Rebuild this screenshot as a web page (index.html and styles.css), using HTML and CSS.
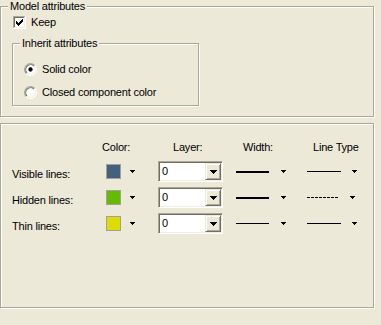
FILE: index.html
```html
<!DOCTYPE html>
<html>
<head>
<meta charset="utf-8">
<link rel="stylesheet" href="styles.css">
</head>
<body>
<div class="page">
  <div class="group model">
    <span class="legend">Model attributes</span>
    <div class="check-row">
      <svg class="checkbox" width="13" height="13" viewBox="0 0 13 13">
        <rect x="0" y="0" width="13" height="13" fill="#fff"/>
        <path d="M0 0h12v1H1v11H0z" fill="#aca899"/>
        <path d="M1 1h10v1H2v9H1z" fill="#716f64"/>
        <path d="M11 1h1v11H1v-1h10z" fill="#f1efe2"/>
        <rect x="2" y="2" width="9" height="9" fill="#fff"/>
        <path d="M3 5h1v3h-1zM4 6h1v3h-1zM5 7h1v3h-1zM6 6h1v3h-1zM7 5h1v3h-1zM8 4h1v3h-1zM9 3h1v3h-1z" fill="#000"/>
      </svg>
      <span>Keep</span>
    </div>
    <div class="group inherit">
      <span class="legend">Inherit attributes</span>
      <div class="radio-row">
        <svg class="radio" width="13" height="13" viewBox="0 0 12 12">
          <circle cx="6" cy="6" r="4.5" fill="#fff"/>
          <path d="M2.11 9.89A5.5 5.5 0 0 1 9.89 2.11" fill="none" stroke="#aca899"/>
          <path d="M2.82 9.18A4.5 4.5 0 0 1 9.18 2.82" fill="none" stroke="#716f64"/>
          <path d="M9.89 2.11A5.5 5.5 0 0 1 2.11 9.89" fill="none" stroke="#fff"/>
          <path d="M9.18 2.82A4.5 4.5 0 0 1 2.82 9.18" fill="none" stroke="#f1efe2"/>
          <circle cx="6" cy="6" r="2" fill="#000"/>
        </svg>
        <span>Solid color</span>
      </div>
      <div class="radio-row">
        <svg class="radio" width="13" height="13" viewBox="0 0 12 12">
          <circle cx="6" cy="6" r="4.5" fill="#fff"/>
          <path d="M2.11 9.89A5.5 5.5 0 0 1 9.89 2.11" fill="none" stroke="#aca899"/>
          <path d="M2.82 9.18A4.5 4.5 0 0 1 9.18 2.82" fill="none" stroke="#716f64"/>
          <path d="M9.89 2.11A5.5 5.5 0 0 1 2.11 9.89" fill="none" stroke="#fff"/>
          <path d="M9.18 2.82A4.5 4.5 0 0 1 2.82 9.18" fill="none" stroke="#f1efe2"/>
        </svg>
        <span>Closed component color</span>
      </div>
    </div>
  </div>

  <div class="group panel">
    <div class="grid">
      <span></span>
      <span class="head head-color">Color:</span>
      <span class="head head-layer">Layer:</span>
      <span class="head head-width">Width:</span>
      <span class="head head-type">Line Type</span>

      <span class="label">Visible lines:</span>
      <div class="cell"><span class="swatch swatch-blue"></span><svg class="tri" width="5" height="3"><path d="M0 0h5v1h-1v1h-1v1h-1v-1h-1v-1h-1z"/></svg></div>
      <div class="cell"><div class="combo"><span class="value">0</span><span class="combo-btn"><svg width="7" height="4"><path d="M0 0h7v1h-1v1h-1v1h-1v1h-1v-1h-1v-1h-1v-1h-1z"/></svg></span></div></div>
      <div class="cell"><span class="wline thick"></span><svg class="tri tri-w" width="5" height="3"><path d="M0 0h5v1h-1v1h-1v1h-1v-1h-1v-1h-1z"/></svg></div>
      <div class="cell"><span class="tline solid"></span><svg class="tri tri-t" width="5" height="3"><path d="M0 0h5v1h-1v1h-1v1h-1v-1h-1v-1h-1z"/></svg></div>

      <span class="label">Hidden lines:</span>
      <div class="cell"><span class="swatch swatch-green"></span><svg class="tri" width="5" height="3"><path d="M0 0h5v1h-1v1h-1v1h-1v-1h-1v-1h-1z"/></svg></div>
      <div class="cell"><div class="combo"><span class="value">0</span><span class="combo-btn"><svg width="7" height="4"><path d="M0 0h7v1h-1v1h-1v1h-1v1h-1v-1h-1v-1h-1v-1h-1z"/></svg></span></div></div>
      <div class="cell"><span class="wline thick"></span><svg class="tri tri-w" width="5" height="3"><path d="M0 0h5v1h-1v1h-1v1h-1v-1h-1v-1h-1z"/></svg></div>
      <div class="cell"><span class="tline dashed"></span><svg class="tri tri-t" width="5" height="3"><path d="M0 0h5v1h-1v1h-1v1h-1v-1h-1v-1h-1z"/></svg></div>

      <span class="label">Thin lines:</span>
      <div class="cell"><span class="swatch swatch-yellow"></span><svg class="tri" width="5" height="3"><path d="M0 0h5v1h-1v1h-1v1h-1v-1h-1v-1h-1z"/></svg></div>
      <div class="cell"><div class="combo"><span class="value">0</span><span class="combo-btn"><svg width="7" height="4"><path d="M0 0h7v1h-1v1h-1v1h-1v1h-1v-1h-1v-1h-1v-1h-1z"/></svg></span></div></div>
      <div class="cell"><span class="wline thin"></span><svg class="tri tri-w" width="5" height="3"><path d="M0 0h5v1h-1v1h-1v1h-1v-1h-1v-1h-1z"/></svg></div>
      <div class="cell"><span class="tline solid"></span><svg class="tri tri-t" width="5" height="3"><path d="M0 0h5v1h-1v1h-1v1h-1v-1h-1v-1h-1z"/></svg></div>
    </div>
  </div>
</div>
</body>
</html>
```

FILE: styles.css
```css
html, body {
  margin: 0;
  padding: 0;
  background: #ece9d8;
}

body {
  font-family: "Liberation Sans", Arial, sans-serif;
  font-size: 11px;
  line-height: 13px;
  letter-spacing: -0.2px;
  color: #000;
  width: 381px;
  height: 325px;
  overflow: hidden;
}

.page {
  display: flex;
  flex-direction: column;
  align-items: flex-start;
}

.group {
  position: relative;
  box-sizing: border-box;
  border: 1px solid #aca899;
  box-shadow: 1px 1px 0 #fff, inset 1px 1px 0 #fff;
}

.legend {
  position: absolute;
  top: -7px;
  left: 7px;
  padding: 0 2px;
  background: #ece9d8;
  white-space: nowrap;
}

.model {
  margin-top: 6px;
  width: 374px;
  height: 111px;
  display: flex;
  flex-direction: column;
  align-items: flex-start;
}

.check-row {
  display: flex;
  align-items: center;
  height: 13px;
  margin: 9px 0 0 12px;
  gap: 5px;
}

.checkbox,
.radio {
  display: block;
  flex: none;
}

.inherit {
  margin: 14px 0 0 11px;
  width: 187px;
  height: 63px;
  display: flex;
  flex-direction: column;
  align-items: flex-start;
  padding: 19px 0 0 11px;
  gap: 10px;
}

.radio-row {
  display: flex;
  align-items: center;
  height: 13px;
  gap: 5px;
}

.panel {
  margin-top: 6px;
  width: 374px;
  height: 185px;
}

.grid {
  display: grid;
  grid-template-columns: 94px 52px 78px 71px 1fr;
  grid-template-rows: 15px 21px 21px 21px;
  row-gap: 5px;
  padding: 17px 0 0 11px;
}

.head {
  align-self: start;
  white-space: nowrap;
}

.head-color { margin-left: -4px; }
.head-layer { margin-left: 15px; }
.head-width { margin-left: 7px; }
.head-type { margin-left: 6px; }

.label {
  align-self: start;
  padding-top: 7px;
  white-space: nowrap;
}

.cell {
  display: flex;
  align-items: center;
}

.swatch {
  display: block;
  box-sizing: border-box;
  width: 15px;
  height: 15px;
  border: 1px solid #a0a0a0;
}

.swatch-blue { background: #44617b; }
.swatch-green { background: #66bb00; }
.swatch-yellow { background: #dddd00; }

.tri {
  display: block;
  margin-left: 9px;
  fill: #000;
}

.tri-w { margin-left: 12px; }
.tri-t { margin-left: 11px; }

.combo {
  box-sizing: border-box;
  width: 65px;
  height: 21px;
  border: 1px solid;
  border-color: #aca899 #fff #fff #aca899;
  box-shadow: inset 1px 1px 0 #716f64, inset -1px -1px 0 #f1efe2;
  background: #fff;
  display: flex;
  align-items: center;
  padding: 1px;
}

.value {
  flex: 1;
  padding-left: 2px;
}

.combo-btn {
  box-sizing: border-box;
  width: 16px;
  height: 17px;
  border: 1px solid;
  border-color: #ece9d8 #716f64 #716f64 #ece9d8;
  box-shadow: inset 1px 1px 0 #fff, inset -1px -1px 0 #aca899;
  background: #ece9d8;
  display: flex;
  align-items: center;
  justify-content: center;
}

.combo-btn svg {
  display: block;
  fill: #000;
}

.wline {
  display: block;
  width: 33px;
  background: #000;
}

.wline.thick { height: 2px; }
.wline.thin { height: 1px; }

.tline {
  display: block;
  width: 34px;
  height: 1px;
}

.tline.solid { background: #000; }
.tline.dashed {
  width: 32px;
  background: repeating-linear-gradient(to right, #000 0 3px, transparent 3px 4px);
}
```
